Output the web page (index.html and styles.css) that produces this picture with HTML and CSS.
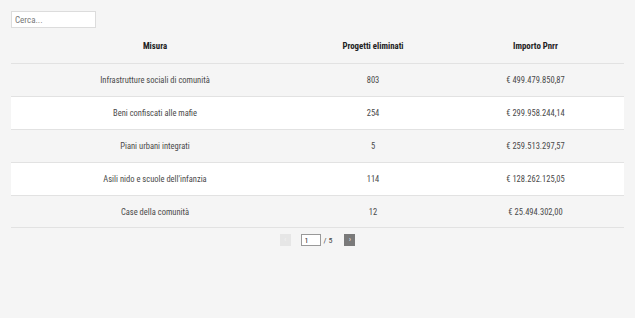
FILE: index.html
```html
<!DOCTYPE html>
<html lang="it">
<head>
<meta charset="utf-8">
<link rel="stylesheet" href="styles.css">
</head>
<body>
<div class="page">
  <input class="search" type="text" placeholder="Cerca...">
  <div class="table">
    <div class="row head">
      <div class="c c1">Misura</div>
      <div class="c c2">Progetti eliminati</div>
      <div class="c c3">Importo Pnrr</div>
    </div>
    <div class="row">
      <div class="c c1">Infrastrutture sociali di comunità</div>
      <div class="c c2">803</div>
      <div class="c c3">€ 499.479.850,87</div>
    </div>
    <div class="row alt">
      <div class="c c1">Beni confiscati alle mafie</div>
      <div class="c c2">254</div>
      <div class="c c3">€ 299.958.244,14</div>
    </div>
    <div class="row">
      <div class="c c1">Piani urbani integrati</div>
      <div class="c c2">5</div>
      <div class="c c3">€ 259.513.297,57</div>
    </div>
    <div class="row alt">
      <div class="c c1">Asili nido e scuole dell'infanzia</div>
      <div class="c c2">114</div>
      <div class="c c3">€ 128.262.125,05</div>
    </div>
    <div class="row">
      <div class="c c1">Case della comunità</div>
      <div class="c c2">12</div>
      <div class="c c3">€ 25.494.302,00</div>
    </div>
  </div>
  <div class="pager">
    <button class="pbtn prev" disabled>‹</button>
    <input class="pinput" type="text" value="1">
    <span class="ptotal">/ 5</span>
    <button class="pbtn next">›</button>
  </div>
</div>
</body>
</html>
```
FILE: styles.css
```css
html, body {
  margin: 0;
  padding: 0;
  background: #f5f5f5;
}
body {
  font-family: "Roboto Condensed", "DejaVu Sans Condensed", Roboto, sans-serif;
  font-stretch: condensed;
  color: #4a4a4a;
  font-size: 8.5px;
}
.page {
  padding: 11px 11px 0 11px;
  width: 613px;
}
.search {
  display: block;
  box-sizing: border-box;
  width: 85px;
  height: 17px;
  margin: 0;
  padding: 0 3px;
  border: 1px solid #dcdcdc;
  background: #fff;
  font: inherit;
  font-size: 9px;
  color: #555;
}
.search::placeholder { color: #777; }
.row {
  display: grid;
  grid-template-columns: 288px 148px 177px;
  height: 33px;
  align-items: center;
  border-top: 1px solid #e2e2e2;
  box-sizing: border-box;
}
.row.head {
  border-top: none;
  height: 35px;
  font-weight: bold;
  font-size: 8.8px;
  color: #222;
}
.row.alt { background: #fff; }
.row:last-child { border-bottom: 1px solid #e2e2e2; }
.c { text-align: center; white-space: nowrap; }
.pager {
  display: flex;
  justify-content: center;
  align-items: center;
  margin-top: 6px;
}
.pbtn {
  width: 11px;
  height: 12px;
  border: none;
  padding: 0;
  font-size: 7px;
  line-height: 12px;
  color: #fff;
  font-family: inherit;
}
.prev { background: #e6e6e6; color: #f5f5f5; margin-right: 10px; }
.next { background: #7a7a7a; margin-left: 12px; }
.pinput {
  box-sizing: border-box;
  width: 20px;
  height: 12px;
  border: 1px solid #999;
  background: #fff;
  padding: 0 3px;
  font: inherit;
  font-size: 8px;
  color: #333;
}
.ptotal { margin-left: 3px; font-size: 8px; color: #444; }
```
